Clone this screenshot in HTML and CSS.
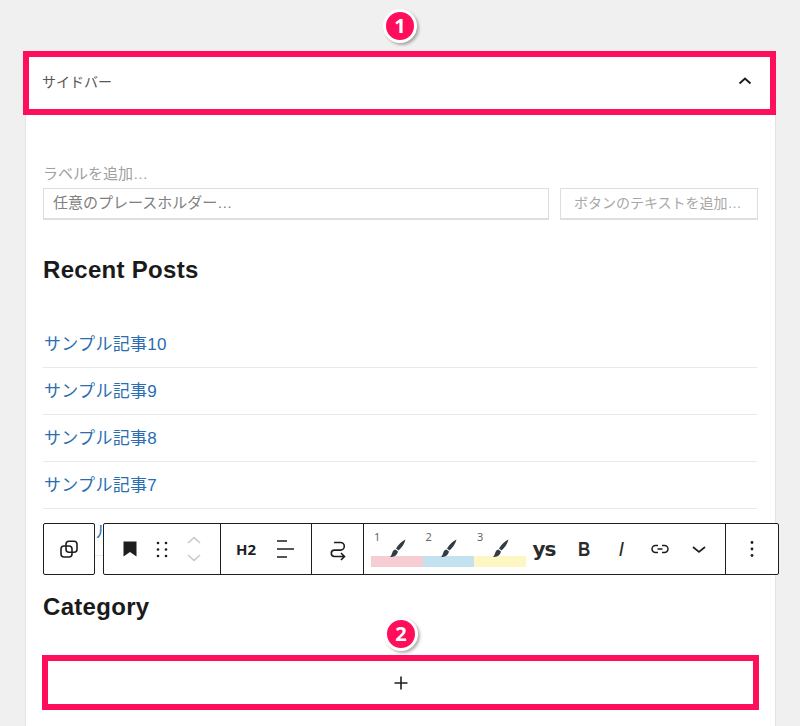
FILE: index.html
```html
<!DOCTYPE html>
<html>
<head lang="ja">
    <meta charset="UTF-8">
    <title>サイドバー</title>
    <link rel="stylesheet" href="styles.css">
</head>
<body>
<div id="top">
    <span class="badge">1</span>
</div>
<div id="panel">
    <div id="head">
        <span>サイドバー</span>
        <svg width="24" height="24" viewBox="0 0 24 24"><path d="M6.500 14.500 12 9.500l5.500 5" fill="none" stroke="#1e1e1e" stroke-width="2"/></svg>
    </div>
    <div id="content">
        <div class="label">ラベルを追加…</div>
        <div id="search">
            <div class="field">任意のプレースホルダー…</div>
            <div class="btn">ボタンのテキストを追加…</div>
        </div>
        <h2 class="recent">Recent Posts</h2>
        <ul id="posts">
            <li><a href="#">サンプル記事10</a></li>
            <li><a href="#">サンプル記事9</a></li>
            <li><a href="#">サンプル記事8</a></li>
            <li><a href="#">サンプル記事7</a></li>
            <li><a href="#">サンプル記事6</a></li>
        </ul>
        <h2 class="cat">Category</h2>
        <div id="add">
            <svg width="24" height="24" viewBox="0 0 24 24"><path d="M12 5.500v13M5.500 12h13" fill="none" stroke="#1e1e1e" stroke-width="1.600"/></svg>
        </div>
    </div>
    <span class="badge badge2">2</span>

    <div id="toolbar">
        <div class="group single">
            <div class="tool"><svg width="24" height="24" viewBox="0 0 24 24"><g fill="none" stroke="#1e1e1e" stroke-width="1.600"><rect x="9" y="4.200" width="11" height="11" rx="3"/><rect x="4" y="9" width="11" height="11" rx="3"/></g></svg></div>
        </div>
        <div class="group">
            <div class="section s1">
                <svg width="24" height="24" viewBox="0 0 24 24"><path d="M5.500 4.500h13v15L12 15l-6.500 4.500z" fill="#1e1e1e"/></svg>
                <svg class="drag" width="24" height="24" viewBox="0 0 24 24"><g fill="#1e1e1e"><circle cx="8" cy="6" r="1.300"/><circle cx="16" cy="6" r="1.300"/><circle cx="8" cy="12.500" r="1.300"/><circle cx="16" cy="12.500" r="1.300"/><circle cx="8" cy="19" r="1.300"/><circle cx="16" cy="19" r="1.300"/></g></svg>
                <svg class="mover" width="24" height="30" viewBox="0 0 24 30"><path d="M6 9l6-5.500L18 9M6 21l6 5.500L18 21" fill="none" stroke="#c8c8c8" stroke-width="1.600"/></svg>
            </div>
            <div class="section s2">
                <span class="h2">H2</span>
                <svg width="24" height="24" viewBox="0 0 24 24"><path d="M4 4h10M4 12h17M4 20h10" fill="none" stroke="#1e1e1e" stroke-width="1.600"/></svg>
            </div>
            <div class="section s3">
                <svg width="24" height="24" viewBox="0 0 24 24"><path d="M8 5.500h6.500a3.800 3.800 0 0 1 0 7.600h-6a3.200 3.200 0 0 0 0 6.400H18M15 16l3.500 3.500L15 23" fill="none" stroke="#1e1e1e" stroke-width="1.600"/></svg>
            </div>
            <div class="section s4">
                <div class="brush c1"><i>1</i><svg width="24" height="24" viewBox="0 0 24 24"><path d="M20.500 3.500c-3.500 1.500-7 5-9.500 9l2.500 2c3-2.500 6-6.500 7-11zM10.500 13.500c-2.500.3-3 2.500-3.500 4-.3 1-1 2.500-2 3.500 3.500 0 7-.8 8-5.500z" fill="#333c44"/></svg></div>
                <div class="brush c2"><i>2</i><svg width="24" height="24" viewBox="0 0 24 24"><path d="M20.500 3.500c-3.500 1.500-7 5-9.500 9l2.500 2c3-2.500 6-6.500 7-11zM10.500 13.500c-2.500.3-3 2.500-3.500 4-.3 1-1 2.500-2 3.500 3.500 0 7-.8 8-5.500z" fill="#333c44"/></svg></div>
                <div class="brush c3"><i>3</i><svg width="24" height="24" viewBox="0 0 24 24"><path d="M20.500 3.500c-3.500 1.500-7 5-9.500 9l2.500 2c3-2.500 6-6.500 7-11zM10.500 13.500c-2.500.3-3 2.500-3.500 4-.3 1-1 2.500-2 3.500 3.500 0 7-.8 8-5.500z" fill="#333c44"/></svg></div>
                <span class="ys">ys</span>
                <span class="bold">B</span>
                <span class="ital">I</span>
                <svg class="link" width="24" height="24" viewBox="0 0 24 24"><path d="M10 8.500H7.500a3.500 3.500 0 0 0 0 7H10M14 8.500h2.500a3.500 3.500 0 0 1 0 7H14M9.500 12h5" fill="none" stroke="#1e1e1e" stroke-width="1.500"/></svg>
                <svg class="more" width="24" height="24" viewBox="0 0 24 24"><path d="M6 10l6 5 6-5" fill="none" stroke="#1e1e1e" stroke-width="1.700"/></svg>
            </div>
            <div class="section s5">
                <svg width="24" height="24" viewBox="0 0 24 24"><g fill="#1e1e1e"><circle cx="12" cy="5.500" r="1.400"/><circle cx="12" cy="12" r="1.400"/><circle cx="12" cy="18.500" r="1.400"/></g></svg>
            </div>
        </div>
    </div>
</div>
</body>
</html>
```

FILE: styles.css
```css
*{
    padding:0;
    margin:0;
    box-sizing:border-box;
}
ul{
    list-style:none;
}
a{
    text-decoration:none;
}
html,body{
    height:726px;
    overflow:hidden;
}
body{
    background:#f0f0f0;
    font-family:"Liberation Sans","Noto Sans CJK JP",sans-serif;
    color:#1e1e1e;
}
#top{
    height:51px;
    display:flex;
    justify-content:center;
    padding-top:9px;
}
.badge{
    width:34px;
    height:34px;
    border-radius:50%;
    background:#ff0f5b;
    border:3px solid #fff;
    box-shadow:2px 2px 3px rgba(0,0,0,.3);
    color:#fff;
    font-size:20px;
    font-weight:bold;
    line-height:28px;
    text-align:center;
    font-family:"Noto Sans",sans-serif;
}
#panel{
    width:751px;
    margin-left:25px;
    height:680px;
    background:#fff;
    border-left:1px solid #e4e4e4;
    border-right:1px solid #e4e4e4;
    position:relative;
}
#head{
    height:64px;
    margin:0 -1px 0 -3px;
    border:6px solid #ff0f5b;
    background:#fff;
    display:flex;
    align-items:center;
    justify-content:space-between;
    padding:0 13px 5px 13px;
    font-size:14px;
    color:#555;
}
#content{
    padding:49px 18px 0 17px;
}
.label{
    font-size:15px;
    line-height:20px;
    color:#a0a0a0;
}
#search{
    display:flex;
    gap:11px;
    margin-top:4px;
}
.field,.btn{
    flex:none;
    height:32px;
    border:1px solid #dcdfe0;
    border-bottom-width:2px;
    line-height:28px;
}
.field{
    width:506px;
    padding-left:9px;
    font-size:15px;
    color:#808080;
}
.btn{
    width:198px;
    padding-left:13px;
    font-size:14px;
    color:#a8a8a8;
}
h2{
    font-size:24px;
    font-weight:bold;
    color:#1a1a1a;
    letter-spacing:.3px;
    line-height:28px;
}
.recent{
    margin-top:36px;
}
#posts{
    margin-top:37px;
}
#posts li{
    height:47px;
    border-bottom:1px solid #eaeaea;
    line-height:48px;
    font-size:17px;
}
#posts a{
    color:#2a6db0;
    letter-spacing:.3px;
    margin-left:1px;
}
.cat{
    margin-top:37px;
}
#add{
    margin:34px -2px 0 -1px;
    height:55px;
    border:6px solid #ff0f5b;
    display:flex;
    align-items:center;
    justify-content:center;
}
.badge2{
    position:absolute;
    left:358px;
    top:566px;
}
#toolbar{
    position:absolute;
    left:17px;
    top:472px;
    display:flex;
    gap:8px;
}
.group{
    display:flex;
    height:52px;
    border:1px solid #1e1e1e;
    border-radius:2px;
    background:#fff;
}
.tool{
    width:50px;
    display:flex;
    align-items:center;
    justify-content:center;
}
.section{
    display:flex;
    align-items:center;
    border-right:1px solid #1e1e1e;
}
.section:last-child{
    border-right:none;
}
.s1{
    width:117px;
    padding-left:14px;
    gap:8px;
}
.mover{
    margin-left:0;
}
.s2{
    width:91px;
    padding-left:15px;
    gap:17px;
}
.h2{
    font-family:"Noto Sans",sans-serif;
    font-weight:bold;
    font-size:15px;
}
.s3{
    width:52px;
    justify-content:center;
}
.s4{
    width:362px;
    padding-left:7px;
}
.s5{
    width:52px;
    justify-content:center;
}
.brush{
    width:51.500px;
    height:50px;
    position:relative;
    display:flex;
    align-items:center;
    justify-content:center;
}
.brush svg{
    position:relative;
    z-index:1;
    left:0;
    top:-1px;
}
.brush:after{
    content:"";
    position:absolute;
    left:0;
    right:0;
    top:32px;
    height:11px;
    z-index:0;
}
.c1:after{
    background:#f5cdd3;
}
.c2:after{
    background:#c3e2f0;
}
.c3:after{
    background:#fef7c3;
}
.brush i{
    position:absolute;
    left:3px;
    top:5px;
    font-style:normal;
    font-size:11px;
    color:#666;
    font-family:"Noto Sans",sans-serif;
}
.ys{
    margin-left:7px;
    font-family:"DejaVu Sans",sans-serif;
    font-weight:bold;
    font-size:20px;
    line-height:20px;
    letter-spacing:-1px;
    color:#2b2b2b;
    width:30px;
}
.bold{
    margin-left:15px;
    font-weight:bold;
    font-size:20px;
    width:14px;
    color:#2b2b2b;
    transform:scaleX(.85);
    transform-origin:left center;
}
.ital{
    margin-left:27px;
    font-style:italic;
    font-size:20px;
    width:8px;
    color:#2b2b2b;
}
.link{
    margin-left:21px;
}
.more{
    margin-left:15px;
}
```
